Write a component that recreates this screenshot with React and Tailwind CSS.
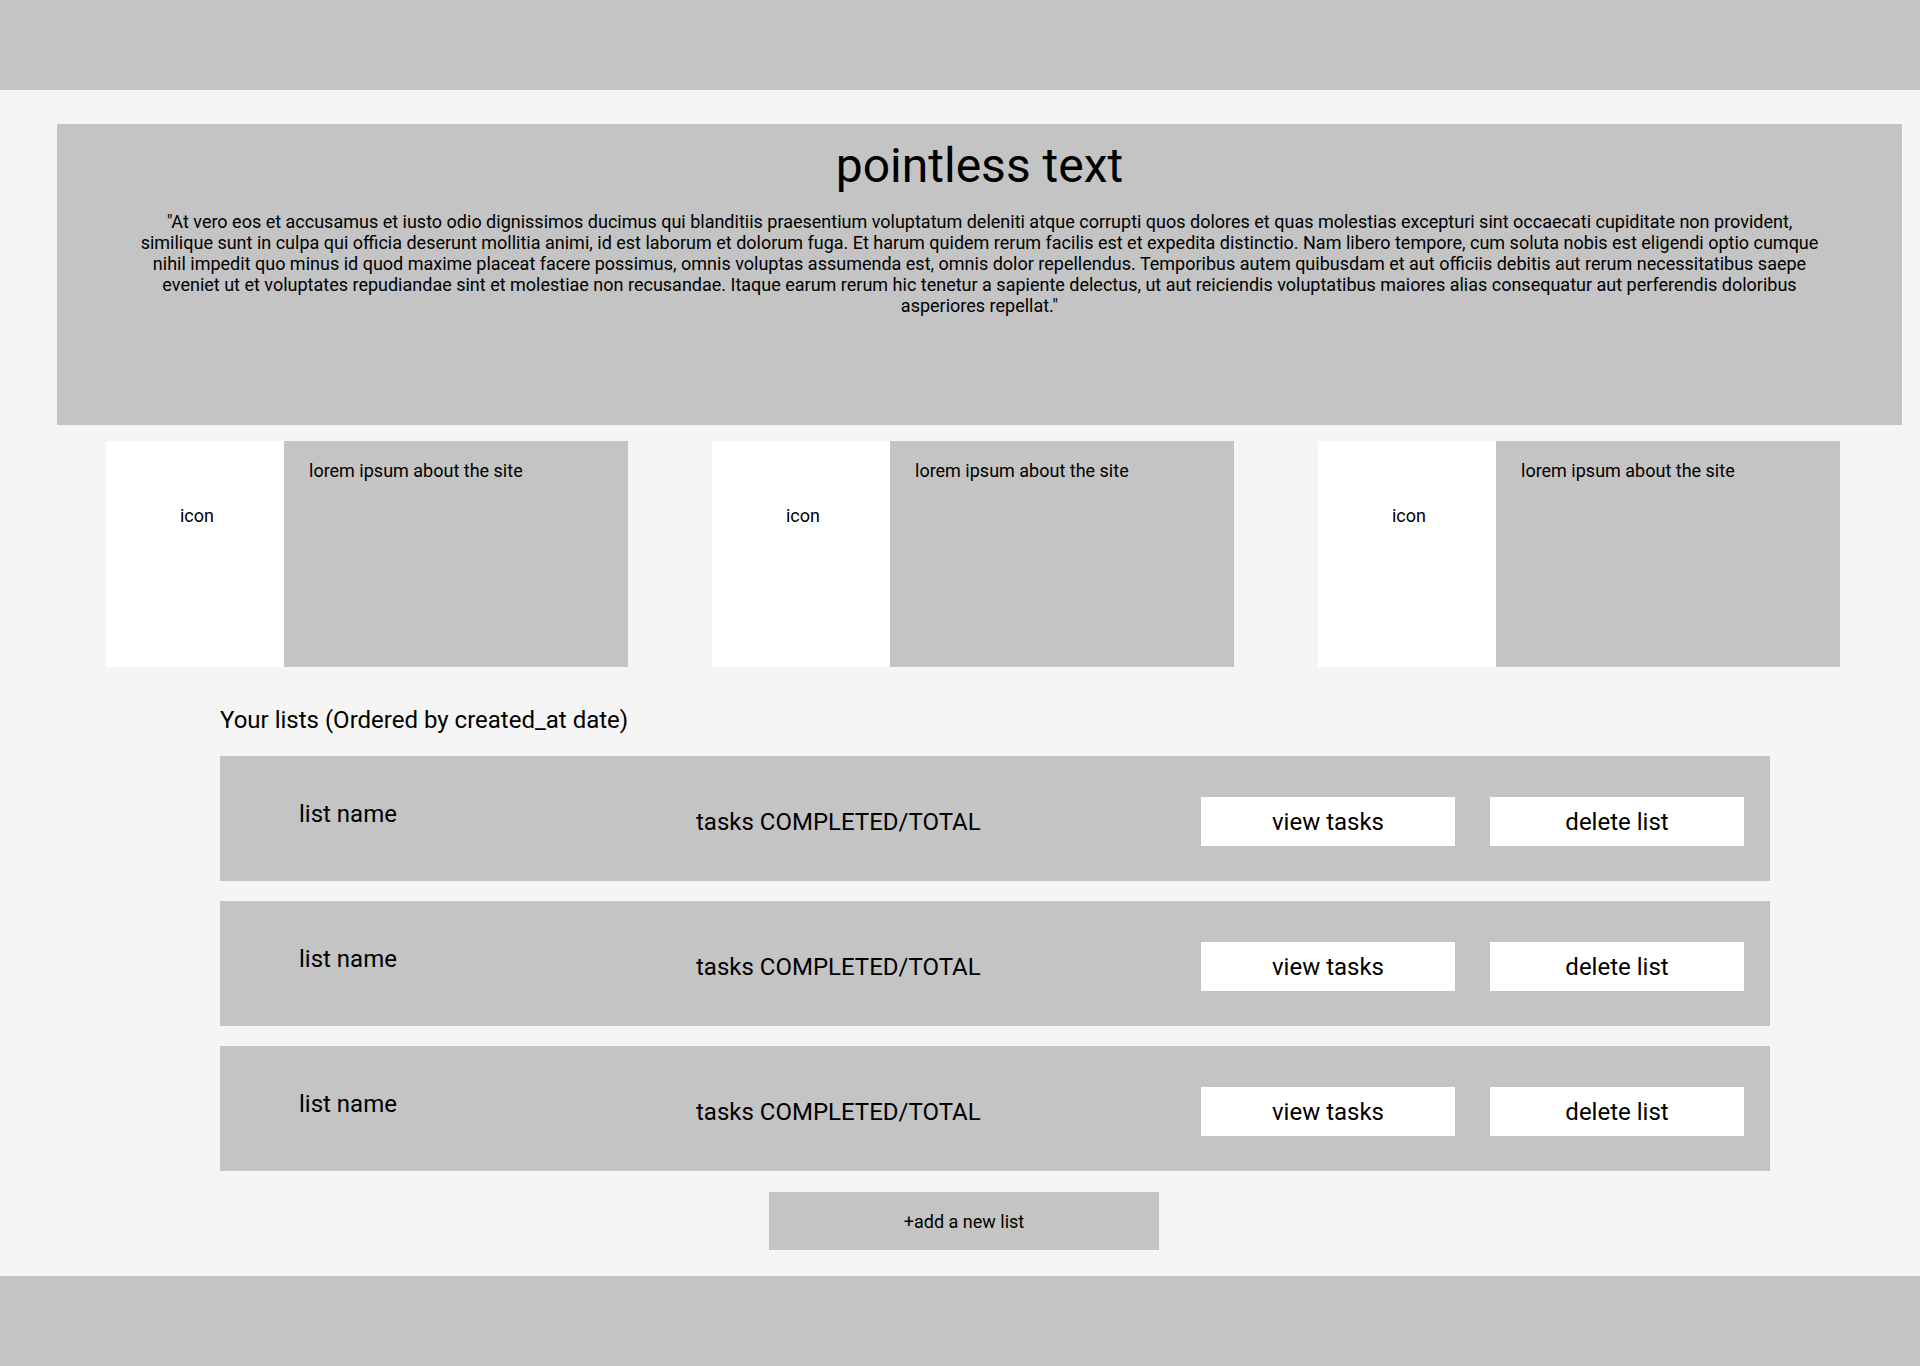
import React from "react";

const para =
  '"At vero eos et accusamus et iusto odio dignissimos ducimus qui blanditiis praesentium voluptatum deleniti atque corrupti quos dolores et quas molestias excepturi sint occaecati cupiditate non provident, similique sunt in culpa qui officia deserunt mollitia animi, id est laborum et dolorum fuga. Et harum quidem rerum facilis est et expedita distinctio. Nam libero tempore, cum soluta nobis est eligendi optio cumque nihil impedit quo minus id quod maxime placeat facere possimus, omnis voluptas assumenda est, omnis dolor repellendus. Temporibus autem quibusdam et aut officiis debitis aut rerum necessitatibus saepe eveniet ut et voluptates repudiandae sint et molestiae non recusandae. Itaque earum rerum hic tenetur a sapiente delectus, ut aut reiciendis voluptatibus maiores alias consequatur aut perferendis doloribus asperiores repellat."';

function Card() {
  return (
    <div className="flex h-[226px] w-[522px]">
      <div className="w-[178px] bg-white pl-1 pt-[64px] text-center text-[18px] leading-[21px]">icon</div>
      <div className="flex-1 bg-[#c4c4c4] pl-[25px] pt-[19px] text-[18px] leading-[21px]">lorem ipsum about the site</div>
    </div>
  );
}

function Row() {
  return (
    <div className="flex h-[125px] items-start bg-[#c4c4c4] pl-[79px] pr-[26px] text-[24px] leading-[28px]">
      <div className="w-[397px] pt-[44px]">list name</div>
      <div className="flex-1 pt-[52px]">tasks COMPLETED/TOTAL</div>
      <div className="flex gap-[35px] pt-[41px]">
        <button className="flex h-[49px] w-[254px] items-center justify-center bg-white">view tasks</button>
        <button className="flex h-[49px] w-[254px] items-center justify-center bg-white">delete list</button>
      </div>
    </div>
  );
}

export default function App() {
  return (
    <div className="flex min-h-screen flex-col bg-[#f5f5f5] font-['Roboto',_'Liberation_Sans',_sans-serif] text-black">
      <header className="h-[90px] bg-[#c4c4c4]" />
      <main>
        <section className="ml-[57px] mr-[18px] mt-[34px] h-[301px] bg-[#c4c4c4] px-20 pt-[14px] text-center">
          <h1 className="text-[48px] font-normal leading-[56px]">pointless text</h1>
          <p className="mt-[17px] text-[18px] leading-[21px]">{para}</p>
        </section>
        <section className="mt-4 flex gap-[84px] pl-[106px]">
          <Card />
          <Card />
          <Card />
        </section>
        <section className="ml-[220px] w-[1550px]">
          <h2 className="mt-[39px] text-[24px] font-normal leading-[28px]">Your lists (Ordered by created_at date)</h2>
          <div className="mt-[22px] flex flex-col gap-5">
            <Row />
            <Row />
            <Row />
          </div>
        </section>
        <button className="ml-[769px] mt-[21px] flex h-[58px] w-[390px] items-center justify-center bg-[#c4c4c4] text-[18px] leading-[21px]">
          +add a new list
        </button>
      </main>
      <footer className="mt-auto h-[90px] bg-[#c4c4c4]" />
    </div>
  );
}
